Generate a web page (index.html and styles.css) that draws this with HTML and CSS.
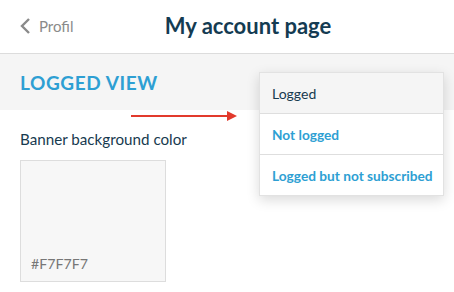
FILE: index.html
```html
<!DOCTYPE html>
<html>
<head>
<meta charset="utf-8">
<link rel="stylesheet" href="styles.css">
</head>
<body>
<div class="page">
  <header class="topbar">
    <a class="back">
      <svg class="chev" width="12" height="18" viewBox="0 0 12 18"><path d="M10 2 L3 9 L10 16" fill="none" stroke="#8a8a8a" stroke-width="2.4"/></svg>
      <span>Profil</span>
    </a>
    <h1 class="title">My account page</h1>
  </header>
  <section class="band">
    <h2 class="band-title">LOGGED VIEW</h2>
  </section>
  <section class="content">
    <svg class="arrow" width="108" height="12" viewBox="0 0 108 12"><line x1="0" y1="6" x2="98" y2="6" stroke="#e23a2c" stroke-width="2"/><path d="M96 1 L106 6 L96 11 Z" fill="#e23a2c"/></svg>
    <div class="label">Banner background color</div>
    <div class="swatch"><span>#F7F7F7</span></div>
  </section>
  <ul class="menu">
    <li class="item active">Logged</li>
    <li class="item">Not logged</li>
    <li class="item">Logged but not subscribed</li>
  </ul>
</div>
</body>
</html>
```
FILE: styles.css
```css
* { box-sizing: border-box; margin: 0; padding: 0; }
html, body { width: 454px; height: 292px; overflow: hidden; background: #fff; }
body { font-family: Lato, "Open Sans", sans-serif; }
.page { position: relative; width: 454px; height: 292px; }
.topbar {
  height: 54px;
  border-bottom: 1px solid #dcdcdc;
  display: flex;
  align-items: center;
  justify-content: center;
  position: relative;
}
.back {
  position: absolute;
  left: 19px;
  top: 17px;
  display: flex;
  align-items: center;
  gap: 8px;
  color: #8a8a8a;
  font-size: 15px;
}
.chev { display: block; }
.title {
  font-size: 22px;
  font-weight: 700;
  color: #143b52;
  margin-top: -2px;
  margin-left: 42px;
}
.band {
  height: 56px;
  background: #f5f5f5;
  padding: 17px 20px 0;
}
.band-title {
  font-size: 19px;
  font-weight: 700;
  color: #2e9fd3;
  letter-spacing: 0.6px;
}
.content {
  position: relative;
  padding: 20px 20px 0;
}
.arrow {
  position: absolute;
  left: 131px;
  top: 0px;
}
.label {
  font-size: 15.2px;
  color: #173a4f;
  line-height: 18px;
}
.swatch {
  margin-top: 12px;
  width: 146px;
  height: 122px;
  background: #f7f7f7;
  border: 1px solid #dddddd;
  display: flex;
  align-items: flex-end;
  padding: 0 10px 9px;
}
.swatch span {
  font-size: 14.2px;
  color: #777;
}
.menu {
  position: absolute;
  left: 259px;
  top: 72px;
  width: 185px;
  list-style: none;
  background: #fff;
  border: 1px solid #e2e2e2;
  box-shadow: 0 4px 12px rgba(0,0,0,0.15);
}
.item {
  height: 41px;
  display: flex;
  align-items: center;
  padding-left: 12px;
  font-size: 13.7px;
  font-weight: 700;
  color: #2e9fd3;
  border-top: 1px solid #dedede;
}
.item:first-child { border-top: none; height: 40px; }
.item.active {
  background: #f5f5f5;
  color: #173a4f;
  font-weight: 400;
  font-size: 14px;
}
```
